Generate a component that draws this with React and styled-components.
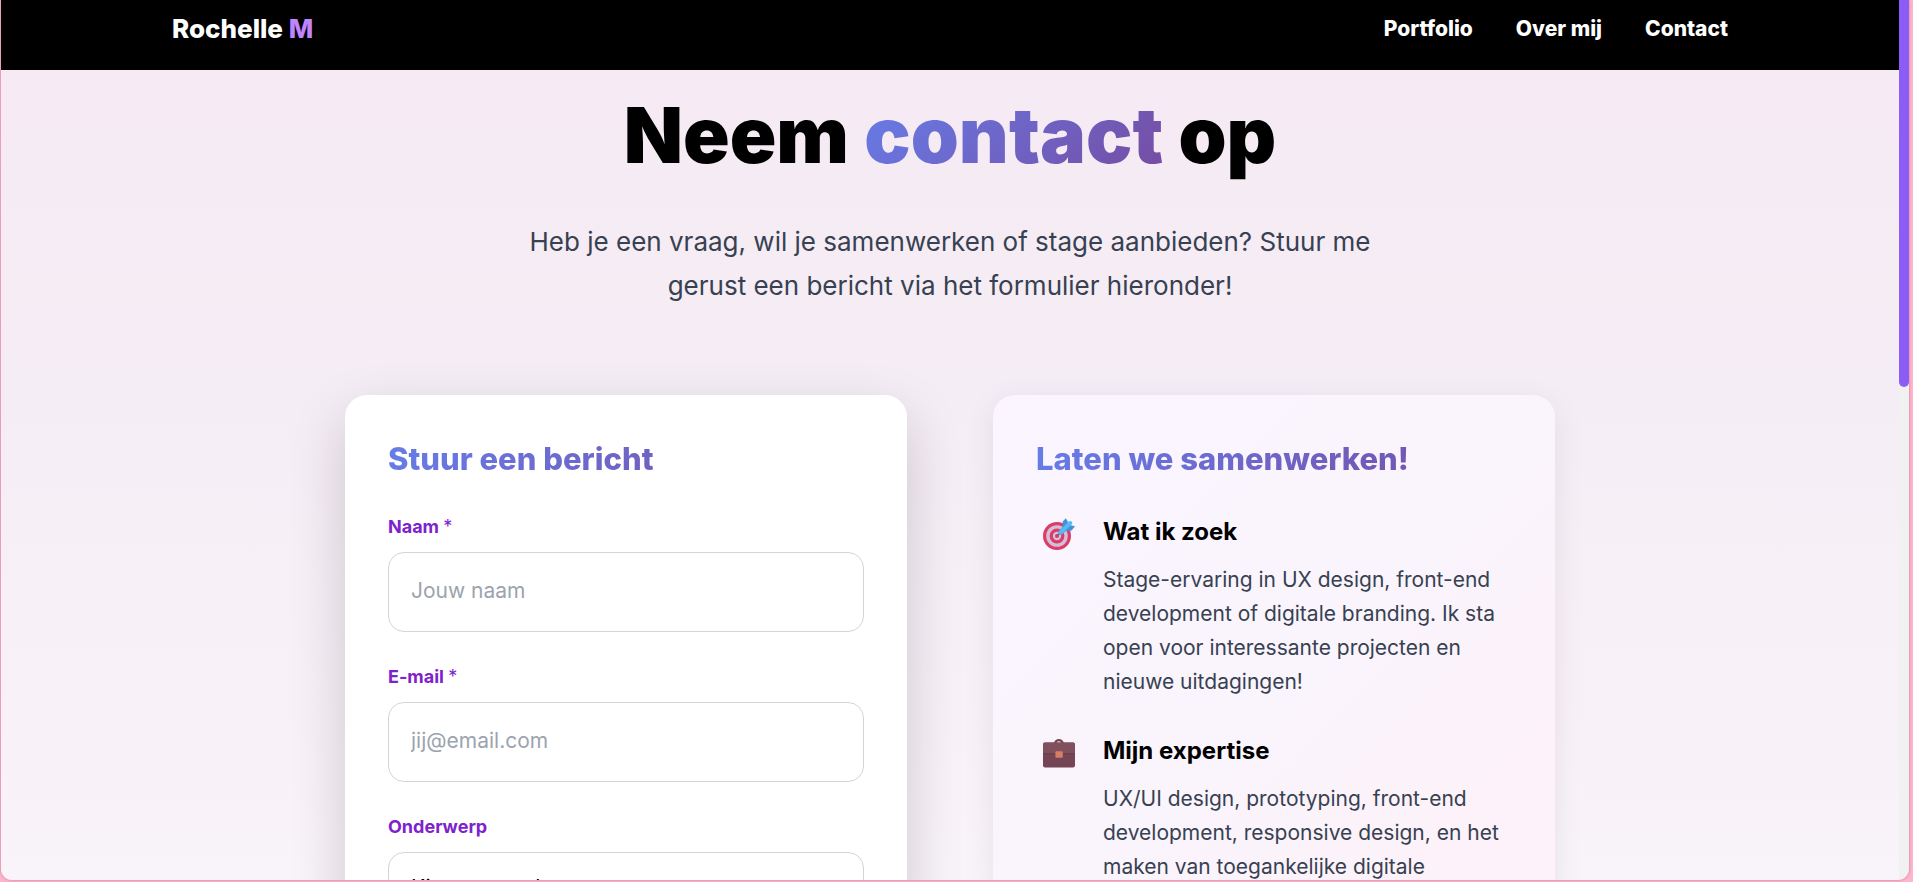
import React from 'react';
import styled, { createGlobalStyle } from 'styled-components';

const GlobalStyle = createGlobalStyle`
  *, *::before, *::after { box-sizing: border-box; }
  html, body, #root { height: 100%; }
  body {
    margin: 0;
    overflow: hidden;
    background: #ffb6cc;
    font-family: Inter, "Liberation Sans", sans-serif;
    color: #000;
  }
  h1, h2, h3, p { margin: 0; }
`;

const gradient = 'linear-gradient(135deg, #667eea 0%, #764ba2 100%)';

const Desktop = styled.div`
  height: 100%;
  padding: 0 4px 2px 1px;
`;

const Frame = styled.div`
  display: flex;
  height: 100%;
  overflow: hidden;
  border-radius: 0 0 11px 11px;
  box-shadow: 0 0 3px rgba(150, 50, 100, 0.5);
`;

const Page = styled.div`
  flex: 1;
  min-width: 0;
  overflow: hidden;
  background: linear-gradient(180deg, #f6eaf3 0%, #f5edf5 45%, #f9f4f9 100%);
`;

const ScrollTrack = styled.div`
  flex: none;
  width: 10px;
  background: #f1f1f1;
`;

const ScrollThumb = styled.div`
  height: 44%;
  border-radius: 0 0 5px 5px;
  background: #8b5cf6;
`;

const Header = styled.header`
  height: 70px;
  padding: 0 24px 14px;
  background: #000;
`;

const HeaderInner = styled.div`
  display: flex;
  align-items: center;
  justify-content: space-between;
  max-width: 1556px;
  height: 100%;
  margin: 0 auto;
`;

const Logo = styled.a`
  color: #fff;
  font-size: 26px;
  font-weight: 800;
  text-decoration: none;
`;

const Accent = styled.span`
  color: #c084fc;
`;

const Nav = styled.nav`
  display: flex;
  gap: 43px;
`;

const NavLink = styled.a`
  color: #fff;
  font-size: 21px;
  font-weight: 800;
  text-decoration: none;
`;

const Main = styled.main`
  max-width: 1258px;
  margin: 0 auto;
  padding: 21px 24px 60px;
`;

const Intro = styled.section`
  display: flex;
  flex-direction: column;
  align-items: center;
  gap: 41px;
  margin-bottom: 87px;
  text-align: center;
`;

const Title = styled.h1`
  font-size: 77px;
  line-height: 88px;
  font-weight: 900;
`;

const GradientText = styled.span`
  background: ${gradient};
  background-clip: text;
  -webkit-background-clip: text;
  color: transparent;
`;

const Lead = styled.p`
  max-width: 880px;
  color: #374151;
  font-size: 26px;
  line-height: 44px;
`;

const Columns = styled.div`
  display: grid;
  grid-template-columns: 1fr 1fr;
  gap: 86px;
  min-height: 640px;
`;

const Card = styled.section`
  padding: 43px;
  border-radius: 22px;
  background: ${(p) => (p.$tinted ? 'linear-gradient(135deg, #faf5ff 0%, #faf4fc 50%, #fdf2f9 75%)' : '#fff')};
  box-shadow: ${(p) => (p.$tinted ? '0 8px 32px rgba(0, 0, 0, 0.08)' : '0 22px 56px rgba(20, 0, 20, 0.18)')};
`;

const CardTitle = styled.h2`
  margin-bottom: 35px;
  background: ${gradient};
  background-clip: text;
  -webkit-background-clip: text;
  color: transparent;
  font-size: 31px;
  line-height: 42px;
  font-weight: 800;
`;

const Form = styled.form`
  display: flex;
  flex-direction: column;
  gap: 32px;
`;

const Field = styled.div`
  display: flex;
  flex-direction: column;
  gap: 13px;

  & + & { padding-top: 1px; }
`;

const Label = styled.label`
  color: #7e22ce;
  font-size: 18px;
  line-height: 24px;
  font-weight: 700;
`;

const Required = styled.span`
  font-weight: 400;
`;

const Input = styled.input`
  width: 100%;
  height: 80px;
  padding: 0 22px 3px;
  border: 1px solid #d1d5db;
  border-radius: 16px;
  background: #fff;
  font: 400 21px Inter, "Liberation Sans", sans-serif;
  &::placeholder { color: #9ca3af; opacity: 1; }
`;

const Select = styled.select`
  width: 100%;
  height: 80px;
  padding: 0 22px 10px;
  border: 1px solid #d1d5db;
  border-radius: 16px;
  background: #fff;
  color: #000;
  appearance: none;
  font: 400 21px Inter, "Liberation Sans", sans-serif;
`;

const InfoList = styled.div`
  display: flex;
  flex-direction: column;
  gap: 35px;
`;

const InfoItem = styled.article`
  display: flex;
  gap: 28px;
`;

const IconBox = styled.div`
  flex: none;
  padding: 3px 0 0 7px;
  svg { display: block; width: 32px; height: 32px; }
`;

const InfoBody = styled.div`
  display: flex;
  flex-direction: column;
  gap: 14px;
`;

const InfoTitle = styled.h3`
  font-size: 24px;
  line-height: 34px;
  font-weight: 700;
`;

const InfoText = styled.p`
  color: #374151;
  font-size: 21px;
  line-height: 34px;
`;

function TargetIcon() {
  return (
    <svg viewBox="0 0 32 32" aria-hidden="true">
      <circle cx="14" cy="18" r="14" fill="#dc3d66" />
      <circle cx="14" cy="18" r="10.8" fill="#d3bfdb" />
      <circle cx="14" cy="18" r="7.4" fill="#dc3d66" />
      <circle cx="14" cy="18" r="4.2" fill="#d3bfdb" />
      <circle cx="14" cy="18" r="2" fill="#dc3d66" />
      <path d="M14.5 17.5 L20 12" stroke="#6f5f95" strokeWidth="1.6" strokeLinecap="round" />
      <path d="M15.5 13 L20 8.3 L24 12.3 L18.8 16.6 Q15.2 17 15.5 13Z" fill="#52a9e3" />
      <path d="M19.6 8.8 L19.8 3.6 L22.8 0.2 L25 3.8 L24.4 9 L21.8 11Z" fill="#3d94dc" />
      <path d="M22 10.6 L27 7 L32 8.2 L28.6 12.4 L23 13Z" fill="#3d94dc" />
      <path d="M18.2 13.8 L27.2 5" stroke="#58baf0" strokeWidth="4" strokeLinecap="round" />
    </svg>
  );
}

function BriefcaseIcon() {
  return (
    <svg viewBox="0 0 32 32" aria-hidden="true">
      <path d="M12.1 7 V5.8 a4 4 0 0 1 7.6 0 V7" fill="none" stroke="#74464e" strokeWidth="2.2" />
      <rect x="0" y="5.5" width="32" height="25" rx="2" fill="#754556" />
      <path d="M2 5.5 H30 a2 2 0 0 1 2 2 V15.5 a1.5 1.5 0 0 1 -1.5 1.5 H1.5 A1.5 1.5 0 0 1 0 15.5 V7.5 a2 2 0 0 1 2 -2Z" fill="#80505d" />
      <path d="M0.5 16.8 H31.5" stroke="#643a4c" strokeWidth="1" />
      <rect x="12.4" y="14.2" width="7.4" height="6.6" rx="1" fill="#d47e64" />
    </svg>
  );
}

const infoItems = [
  {
    title: 'Wat ik zoek',
    Icon: TargetIcon,
    text: 'Stage-ervaring in UX design, front-end development of digitale branding. Ik sta open voor interessante projecten en nieuwe uitdagingen!',
  },
  {
    title: 'Mijn expertise',
    Icon: BriefcaseIcon,
    text: 'UX/UI design, prototyping, front-end development, responsive design, en het maken van toegankelijke digitale',
  },
];

export default function App() {
  return (
    <Desktop>
      <GlobalStyle />
      <Frame>
        <Page>
          <Header>
            <HeaderInner>
              <Logo href="#home">
                Rochelle <Accent>M</Accent>
              </Logo>
              <Nav>
                <NavLink href="#portfolio">Portfolio</NavLink>
                <NavLink href="#over-mij">Over mij</NavLink>
                <NavLink href="#contact">Contact</NavLink>
              </Nav>
            </HeaderInner>
          </Header>
          <Main>
            <Intro>
              <Title>
                Neem <GradientText>contact</GradientText> op
              </Title>
              <Lead>
                Heb je een vraag, wil je samenwerken of stage aanbieden? Stuur me gerust een bericht via het formulier
                hieronder!
              </Lead>
            </Intro>
            <Columns>
              <Card>
                <CardTitle>Stuur een bericht</CardTitle>
                <Form>
                  <Field>
                    <Label htmlFor="naam">
                      Naam <Required>*</Required>
                    </Label>
                    <Input id="naam" type="text" placeholder="Jouw naam" />
                  </Field>
                  <Field>
                    <Label htmlFor="email">
                      E-mail <Required>*</Required>
                    </Label>
                    <Input id="email" type="email" placeholder="jij@email.com" />
                  </Field>
                  <Field>
                    <Label htmlFor="onderwerp">Onderwerp</Label>
                    <Select id="onderwerp" defaultValue="">
                      <option value="">Kies een onderwerp</option>
                    </Select>
                  </Field>
                </Form>
              </Card>
              <Card $tinted>
                <CardTitle>Laten we samenwerken!</CardTitle>
                <InfoList>
                  {infoItems.map(({ title, Icon, text }) => (
                    <InfoItem key={title}>
                      <IconBox>
                        <Icon />
                      </IconBox>
                      <InfoBody>
                        <InfoTitle>{title}</InfoTitle>
                        <InfoText>{text}</InfoText>
                      </InfoBody>
                    </InfoItem>
                  ))}
                </InfoList>
              </Card>
            </Columns>
          </Main>
        </Page>
        <ScrollTrack>
          <ScrollThumb />
        </ScrollTrack>
      </Frame>
    </Desktop>
  );
}
